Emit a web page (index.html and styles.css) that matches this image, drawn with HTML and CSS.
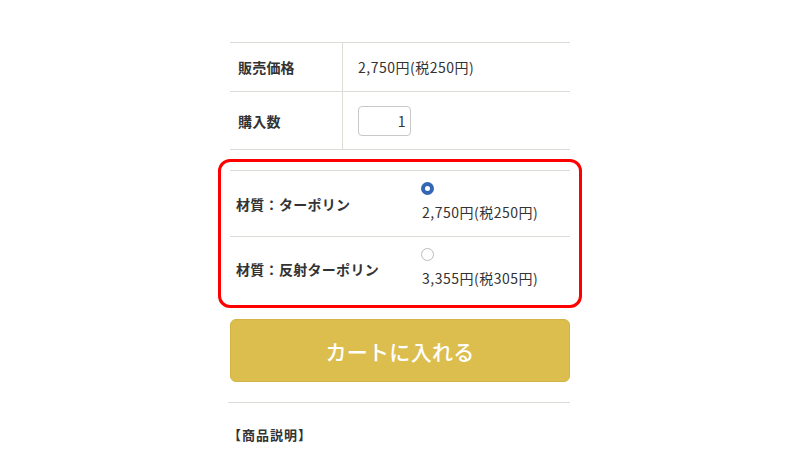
FILE: index.html
```html
<!DOCTYPE html>
<html lang="ja">
<head>
<meta charset="utf-8">
<link rel="stylesheet" href="styles.css">
</head>
<body>
<div class="page">
  <div class="spec">
    <div class="spec-row price-row">
      <div class="spec-label">販売価格</div>
      <div class="spec-value">2,750円(税250円)</div>
    </div>
    <div class="spec-row qty-row">
      <div class="spec-label">購入数</div>
      <div class="spec-value"><span class="qty">1</span></div>
    </div>
  </div>

  <div class="highlight">
    <div class="option">
      <div class="option-label">材質：ターポリン</div>
      <div class="option-choice">
        <span class="radio checked"></span>
        <span class="option-price">2,750円(税250円)</span>
      </div>
    </div>
    <div class="option">
      <div class="option-label">材質：反射ターポリン</div>
      <div class="option-choice">
        <span class="radio"></span>
        <span class="option-price">3,355円(税305円)</span>
      </div>
    </div>
  </div>

  <button class="cart-btn">カートに入れる</button>

  <div class="desc">【商品説明】</div>
</div>
</body>
</html>
```

FILE: styles.css
```css
* { box-sizing: border-box; }
html, body {
  margin: 0;
  padding: 0;
  background: #fff;
}
body {
  font-family: "Noto Sans CJK JP", "Noto Sans", sans-serif;
  color: #333;
}
.page {
  width: 340px;
  margin: 0 auto;
  padding-top: 42px;
}
.spec {
  border-top: 1px solid #dddcd7;
}
.spec-row {
  display: flex;
  border-bottom: 1px solid #dddcd7;
}
.price-row { height: 49px; }
.qty-row { height: 58px; }
.spec-label {
  width: 113px;
  border-right: 1px solid #dddcd7;
  display: flex;
  align-items: center;
  padding-left: 8px;
  font-size: 14px;
  font-weight: bold;
  letter-spacing: 0.2px;
}
.spec-value {
  display: flex;
  align-items: center;
  padding-left: 15px;
  font-size: 14px;
  letter-spacing: 0.5px;
}
.qty {
  width: 53px;
  height: 30px;
  border: 1px solid #c8c8c8;
  border-radius: 4px;
  display: flex;
  align-items: center;
  justify-content: flex-end;
  padding-right: 4px;
  font-size: 14px;
}
.highlight {
  margin: 9px -12px 0;
  border: 3px solid #f00;
  border-radius: 12px;
  padding: 8px 9px 5px;
}
.option {
  display: flex;
  border-top: 1px solid #dddcd7;
  height: 66px;
}
.option + .option { height: 64px; }
.option-label {
  width: 190px;
  display: flex;
  align-items: center;
  padding-left: 6px;
  font-size: 14px;
  font-weight: bold;
  letter-spacing: 0.3px;
}
.option-choice {
  display: flex;
  flex-direction: column;
  align-items: flex-start;
  padding-top: 11px;
  padding-left: 2px;
}
.radio {
  width: 13px;
  height: 13px;
  border-radius: 50%;
  border: 1px solid #bbb;
  background: #fff;
  margin-left: -1px;
}
.radio.checked {
  border: 4px solid #3466b5;
}
.option-price {
  font-size: 14px;
  line-height: 20px;
  margin-top: 7px;
  letter-spacing: 0.5px;
}
.cart-btn {
  display: block;
  width: 100%;
  height: 63px;
  margin-top: 11px;
  background: #dcbe4e;
  border: 1px solid #d4b444;
  border-radius: 6px;
  color: #fff;
  font-family: inherit;
  font-size: 21px;
  font-weight: 500;
  letter-spacing: 0.3px;
}
.desc {
  margin-top: 20px;
  border-top: 1px solid #dddcd7;
  padding-top: 22px;
  font-size: 13px;
  font-weight: bold;
  letter-spacing: 1px;
  margin-left: -2px;
}
```
